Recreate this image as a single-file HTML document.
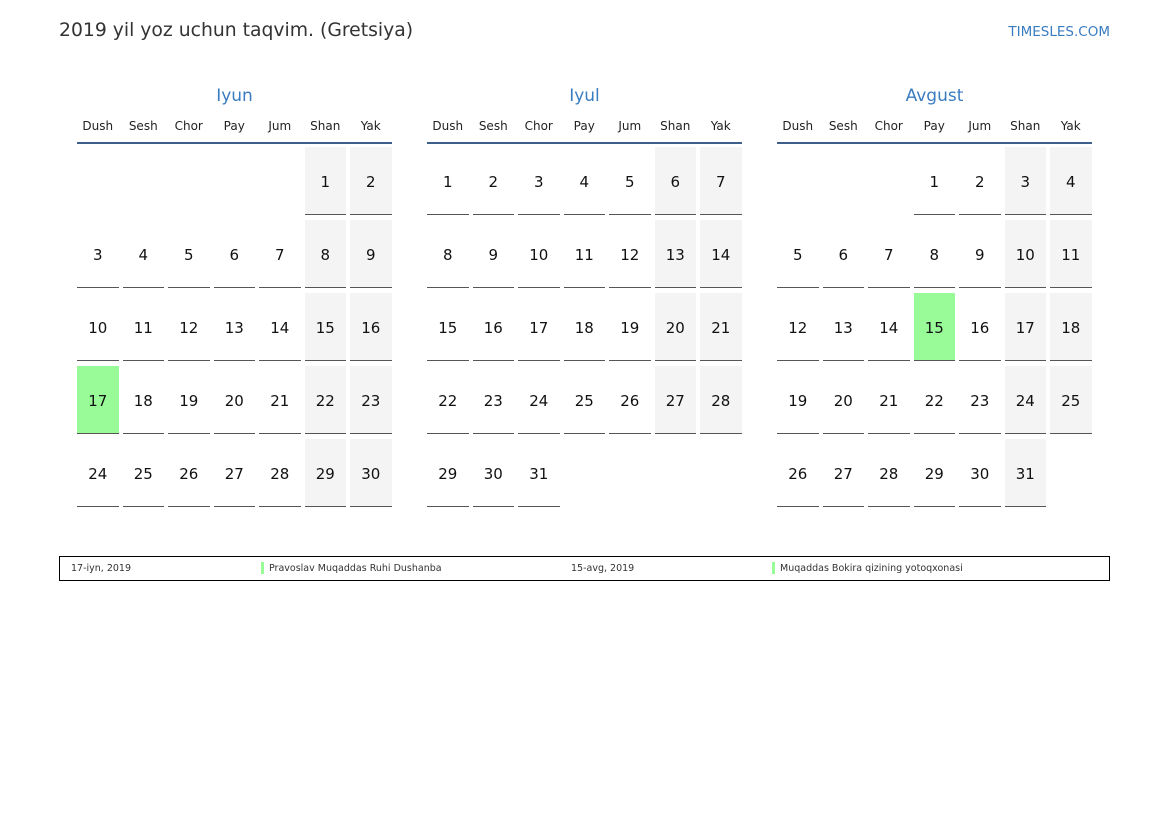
<!DOCTYPE html><html><head><meta charset="utf-8"><style>
body{margin:0;width:1169px;height:827px;background:#fff;font-family:"DejaVu Sans","Liberation Sans",sans-serif;position:relative;overflow:hidden}
.t{position:absolute;left:59px;top:20px;font-size:18.8px;color:#333}
.s{position:absolute;right:59px;top:24px;font-size:13.5px;color:#3a7cc0}
.m{position:absolute;top:86px;width:315px}
.mn{text-align:center;font-size:17px;color:#3a7cc0;height:22px}
.dn{display:grid;grid-template-columns:repeat(7,41.5px);column-gap:4px;font-size:12px;color:#222;text-align:center;height:22px;line-height:36px;border-bottom:2px solid #3d5f8a;padding-bottom:12px}
.g{display:grid;grid-template-columns:repeat(7,41.5px);grid-auto-rows:68px;column-gap:4px;row-gap:5px;margin-top:3px}
.g div{border-bottom:1.5px solid #555;text-align:center;line-height:70px;font-size:15px;color:#111}
.g div.e{border:none}
.g div.w{background:#f4f4f4}
.g div.h{background:#98fb98}
.lg{position:absolute;left:59px;top:556px;width:1049px;height:23px;border:1px solid #000;font-size:9.5px;color:#333;line-height:24px}
.lg span{position:absolute}
.bar{display:inline-block;width:3px;height:12px;background:#98fb98;position:absolute;top:5px}
</style></head><body>
<div class="t">2019 yil yoz uchun taqvim. (Gretsiya)</div>
<div class="s">TIMESLES.COM</div>

<div class="m" style="left:77px"><div class="mn">Iyun</div>
<div class="dn"><span>Dush</span><span>Sesh</span><span>Chor</span><span>Pay</span><span>Jum</span><span>Shan</span><span>Yak</span></div>
<div class="g">
<div class="e"></div><div class="e"></div><div class="e"></div><div class="e"></div><div class="e"></div><div class="w">1</div><div class="w">2</div>
<div>3</div><div>4</div><div>5</div><div>6</div><div>7</div><div class="w">8</div><div class="w">9</div>
<div>10</div><div>11</div><div>12</div><div>13</div><div>14</div><div class="w">15</div><div class="w">16</div>
<div class="h">17</div><div>18</div><div>19</div><div>20</div><div>21</div><div class="w">22</div><div class="w">23</div>
<div>24</div><div>25</div><div>26</div><div>27</div><div>28</div><div class="w">29</div><div class="w">30</div>
</div></div>

<div class="m" style="left:427px"><div class="mn">Iyul</div>
<div class="dn"><span>Dush</span><span>Sesh</span><span>Chor</span><span>Pay</span><span>Jum</span><span>Shan</span><span>Yak</span></div>
<div class="g">
<div>1</div><div>2</div><div>3</div><div>4</div><div>5</div><div class="w">6</div><div class="w">7</div>
<div>8</div><div>9</div><div>10</div><div>11</div><div>12</div><div class="w">13</div><div class="w">14</div>
<div>15</div><div>16</div><div>17</div><div>18</div><div>19</div><div class="w">20</div><div class="w">21</div>
<div>22</div><div>23</div><div>24</div><div>25</div><div>26</div><div class="w">27</div><div class="w">28</div>
<div>29</div><div>30</div><div>31</div>
</div></div>

<div class="m" style="left:777px"><div class="mn">Avgust</div>
<div class="dn"><span>Dush</span><span>Sesh</span><span>Chor</span><span>Pay</span><span>Jum</span><span>Shan</span><span>Yak</span></div>
<div class="g">
<div class="e"></div><div class="e"></div><div class="e"></div><div>1</div><div>2</div><div class="w">3</div><div class="w">4</div>
<div>5</div><div>6</div><div>7</div><div>8</div><div>9</div><div class="w">10</div><div class="w">11</div>
<div>12</div><div>13</div><div>14</div><div class="h">15</div><div>16</div><div class="w">17</div><div class="w">18</div>
<div>19</div><div>20</div><div>21</div><div>22</div><div>23</div><div class="w">24</div><div class="w">25</div>
<div>26</div><div>27</div><div>28</div><div>29</div><div>30</div><div class="w">31</div>
</div></div>

<div class="lg">
<span style="left:11px">17-iyn, 2019</span>
<i class="bar" style="left:201px"></i><span style="left:209px">Pravoslav Muqaddas Ruhi Dushanba</span>
<span style="left:511px">15-avg, 2019</span>
<i class="bar" style="left:712px"></i><span style="left:720px">Muqaddas Bokira qizining yotoqxonasi</span>
</div>
</body></html>
